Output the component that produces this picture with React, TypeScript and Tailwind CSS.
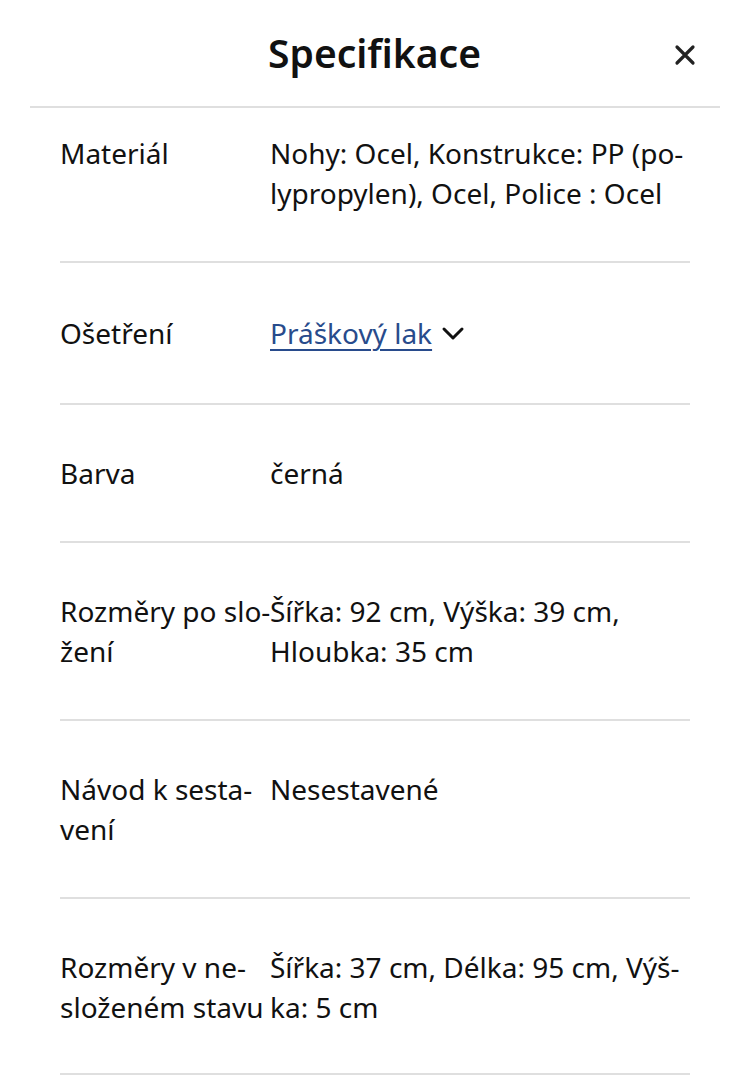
import React from "react";

const rows: { label: React.ReactNode; value: React.ReactNode }[] = [
  {
    label: "Materiál",
    value: (
      <>
        Nohy: Ocel, Konstrukce: PP (po-
        <br />
        lypropylen), Ocel, Police : Ocel
      </>
    ),
  },
  {
    label: "Ošetření",
    value: (
      <span className="inline-flex items-center gap-[9px]">
        <span className="text-[#284b8c] underline underline-offset-[5px] decoration-[1.5px]">Práškový lak</span>
        <svg width="24" height="24" viewBox="0 0 24 24" fill="none" stroke="#111" strokeWidth="3" strokeLinecap="round" strokeLinejoin="round">
          <path d="M3 8l9 9 9-9" />
        </svg>
      </span>
    ),
  },
  { label: "Barva", value: "černá" },
  {
    label: (
      <>
        Rozměry po slo-
        <br />
        žení
      </>
    ),
    value: (
      <>
        Šířka: 92 cm, Výška: 39 cm,
        <br />
        Hloubka: 35 cm
      </>
    ),
  },
  {
    label: (
      <>
        Návod k sesta-
        <br />
        vení
      </>
    ),
    value: "Nesestavené",
  },
  {
    label: (
      <>
        Rozměry v ne-
        <br />
        složeném stavu
      </>
    ),
    value: (
      <>
        Šířka: 37 cm, Délka: 95 cm, Výš-
        <br />
        ka: 5 cm
      </>
    ),
  },
];

export default function App() {
  return (
    <div className="w-[738px] h-[1075px] overflow-hidden bg-white text-[#111] font-['Noto_Sans',sans-serif]">
      <div className="relative h-[106px] flex items-center justify-center">
        <h1 className="text-[39px] font-semibold leading-none -mt-[2px] ml-[11px]">Specifikace</h1>
        <button className="absolute right-[41px] top-[43px]">
          <svg width="24" height="24" viewBox="0 0 24 24" fill="none" stroke="#222" strokeWidth="3.2" strokeLinecap="round">
            <path d="M4 4l16 16M20 4L4 20" />
          </svg>
        </button>
      </div>
      <div className="ml-[30px] mr-[18px] h-[2px] bg-[#dfdfdf]" />
      <div className="pl-[60px] pr-[48px]">
        {rows.map((r, i) => (
          <div
            key={i}
            className={`flex border-b-2 border-[#dfdfdf] text-[28px] leading-[40px] ${
              i === 0
                ? "pt-[25px] pb-[48px]"
                : i === 1
                ? "pt-[50px] pb-[50px]"
                : i === rows.length - 1
                ? "pt-[48px] pb-[46px]"
                : "py-[48px]"
            }`}
          >
            <div className="w-[210px] shrink-0 whitespace-nowrap">{r.label}</div>
            <div className="flex-1 whitespace-nowrap">{r.value}</div>
          </div>
        ))}
      </div>
    </div>
  );
}
